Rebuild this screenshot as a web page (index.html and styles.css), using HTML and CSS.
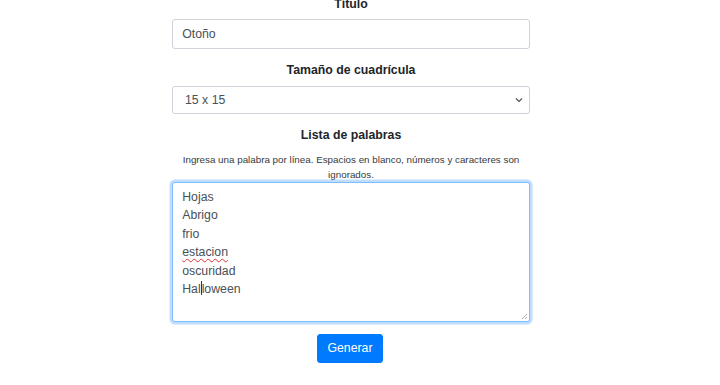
FILE: index.html
```html
<!DOCTYPE html>
<html lang="es">
<head>
<meta charset="utf-8">
<title>Sopa de letras</title>
<link rel="stylesheet" href="styles.css">
</head>
<body>
<form class="form">
  <div class="group">
    <label class="label">Título</label>
    <div class="control">Otoño</div>
  </div>
  <div class="group">
    <label class="label">Tamaño de cuadrícula</label>
    <div class="control select">
      <span>15 x 15</span>
      <svg class="chev" width="8" height="6" viewBox="0 0 8 6"><path d="M1 1.5 L4 4.5 L7 1.5" fill="none" stroke="#555" stroke-width="1.2"/></svg>
    </div>
  </div>
  <div class="group">
    <label class="label">Lista de palabras</label>
    <small class="help">Ingresa una palabra por línea. Espacios en blanco, números y caracteres son ignorados.</small>
    <div class="control textarea">
      <div>Hojas</div>
      <div>Abrigo</div>
      <div>frio</div>
      <div><span class="misspelled">estacion</span></div>
      <div>oscuridad</div>
      <div>Hal<span class="caret"></span>loween</div>
      <svg class="grip" width="8" height="8" viewBox="0 0 8 8"><path d="M7 2 L2 7 M7 5 L5 7" stroke="#999" stroke-width="0.8"/></svg>
    </div>
  </div>
  <div class="actions">
    <button type="button" class="btn">Generar</button>
  </div>
</form>
</body>
</html>
```

FILE: styles.css
```css
html, body {
  margin: 0;
  padding: 0;
  background: #fff;
}
body {
  font-family: "Liberation Sans", Arial, sans-serif;
  font-size: 12.3px;
  line-height: 18.4px;
  color: #212529;
}
.form {
  width: 358px;
  margin: -5.2px 0 0 172px;
  display: flex;
  flex-direction: column;
}
.group {
  display: flex;
  flex-direction: column;
  margin-bottom: 12.3px;
}
.label {
  font-weight: bold;
  text-align: center;
  margin-bottom: 6.1px;
}
.control {
  box-sizing: border-box;
  height: 29.4px;
  border: 1px solid #ced4da;
  border-radius: 3px;
  padding: 4.6px 9.2px;
  color: #495057;
  background: #fff;
}
.select {
  display: flex;
  align-items: center;
  justify-content: space-between;
  padding-left: 12px;
  padding-right: 6px;
  height: 28.6px;
}
.chev { display: block; }
.help {
  display: block;
  font-size: 9.8px;
  line-height: 15px;
  text-align: center;
  color: #343a40;
  padding: 0 6px;
  margin-top: 1px;
}
.textarea {
  position: relative;
  height: 139.5px;
  margin-top: 0.5px;
  border-color: #80bdff;
  box-shadow: 0 0 0 2.5px rgba(0, 123, 255, 0.25);
}
.misspelled {
  text-decoration: underline wavy #e03030;
  text-decoration-thickness: 1px;
  text-underline-offset: 2px;
}
.caret {
  display: inline-block;
  width: 1px;
  height: 14px;
  background: #333;
  vertical-align: -2px;
}
.grip {
  position: absolute;
  right: 1px;
  bottom: 1px;
}
.actions {
  display: flex;
  justify-content: center;
}
.btn {
  font-family: inherit;
  font-size: 12.3px;
  line-height: 18.4px;
  color: #fff;
  background: #007bff;
  border: 1px solid #007bff;
  border-radius: 3px;
  padding: 4px 9.2px;
  margin-left: -2px;
}
```
